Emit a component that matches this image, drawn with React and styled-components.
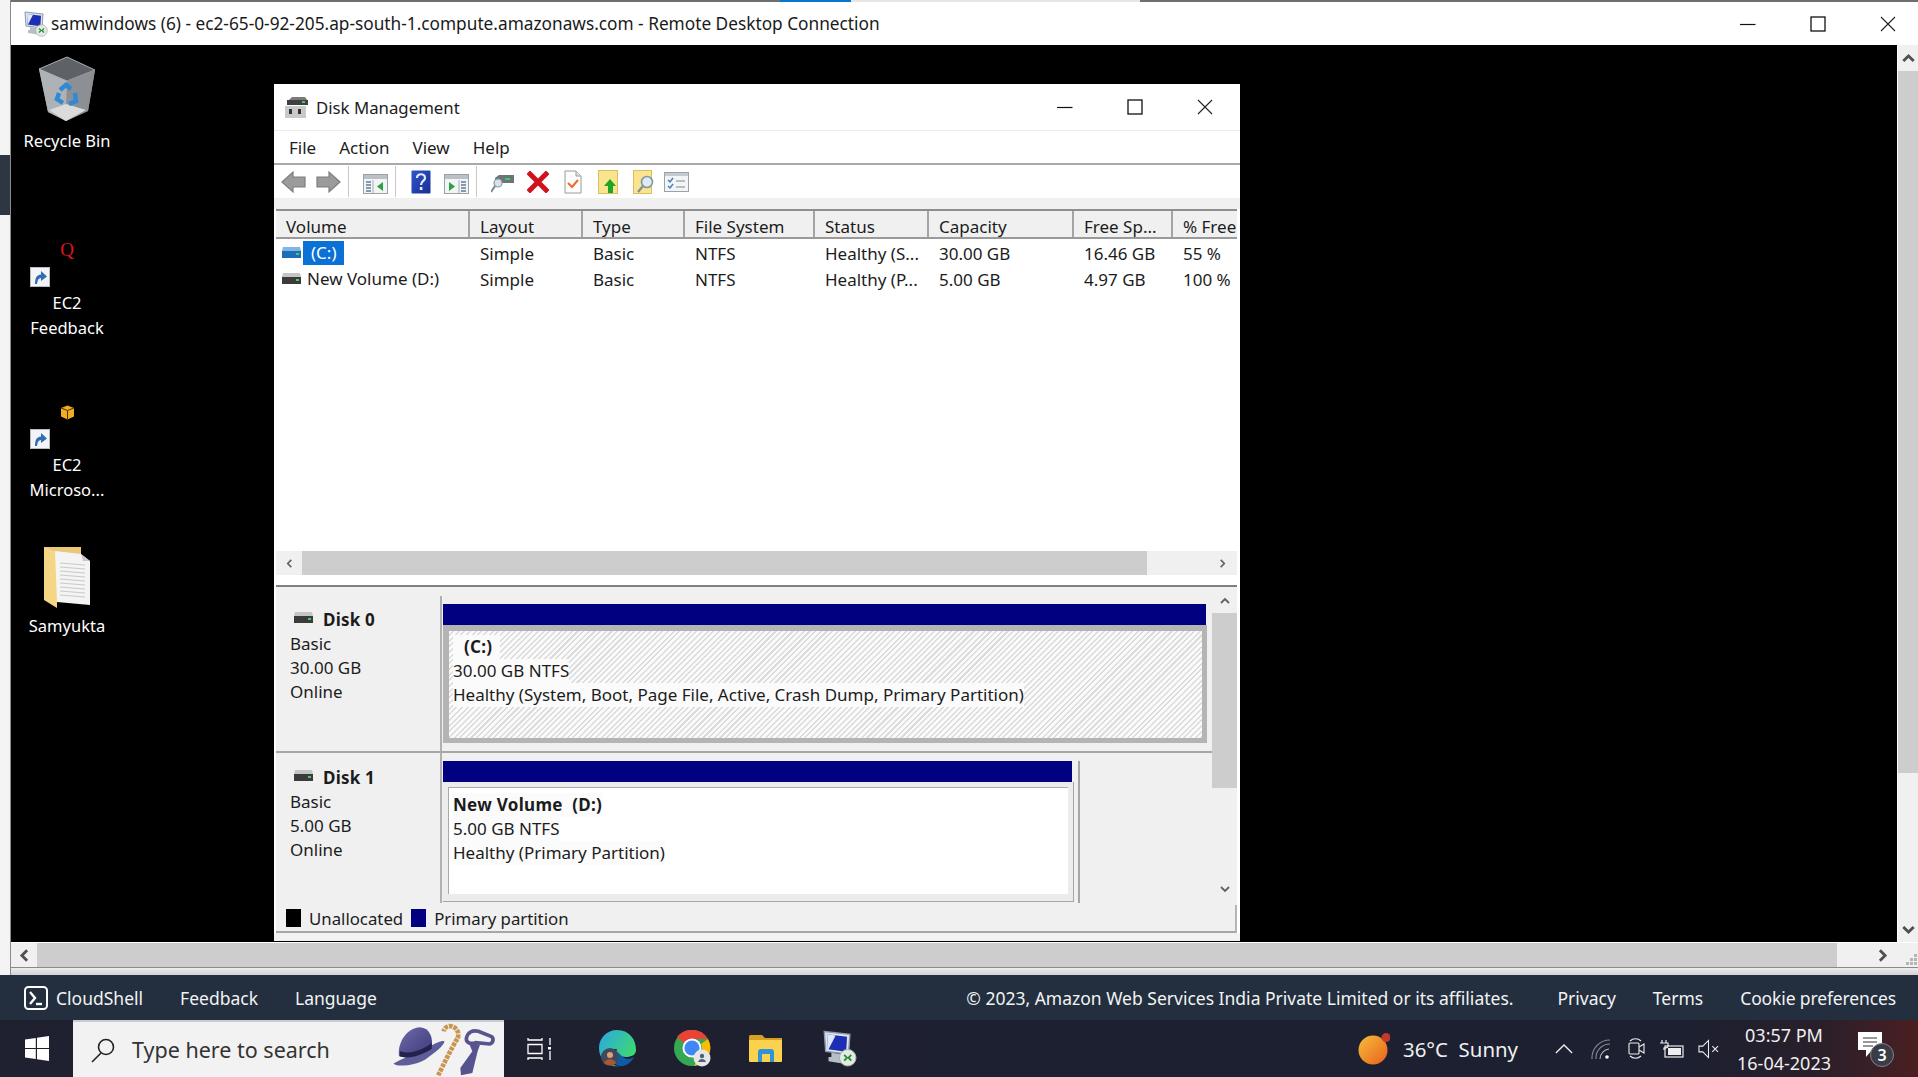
import React from "react";
import styled, { createGlobalStyle } from "styled-components";

const Global = createGlobalStyle`
  html, body { margin: 0; padding: 0; background: #000; }
  * { box-sizing: border-box; }
  body { font-family: "Noto Sans", "Open Sans", sans-serif; }
`;

const COLUMNS = [
  { label: "Volume", width: 194 },
  { label: "Layout", width: 113 },
  { label: "Type", width: 102 },
  { label: "File System", width: 130 },
  { label: "Status", width: 114 },
  { label: "Capacity", width: 145 },
  { label: "Free Sp...", width: 99 },
  { label: "% Free", width: 64 },
];

const VOLUMES = [
  { name: "(C:)", selected: true, cells: ["Simple", "Basic", "NTFS", "Healthy (S...", "30.00 GB", "16.46 GB", "55 %"] },
  { name: "New Volume (D:)", cells: ["Simple", "Basic", "NTFS", "Healthy (P...", "5.00 GB", "4.97 GB", "100 %"] },
];

const App = () => (
  <>
    <Global />
    <Page>
      <Upper>
        <LeftStrip><StripMark /></LeftStrip>
        <RdpFrame>
          <RdpTitle>
            <TopEdge>
              <EdgeSegment $w={769} $c="#6f6f6f" />
              <EdgeSegment $w={71} $c="#0078d4" />
              <EdgeSegment $w={289} $c="#e6e6e6" />
              <EdgeSegment $grow $c="#6f6f6f" />
            </TopEdge>
            <RdpBar>
              <RdpIcon size={26} />
              <RdpText>samwindows (6) - ec2-65-0-92-205.ap-south-1.compute.amazonaws.com - Remote Desktop Connection</RdpText>
              <RdpButtons>
                <MinGlyph />
                <MaxGlyph />
                <CloseGlyph />
              </RdpButtons>
            </RdpBar>
          </RdpTitle>
          <ViewRow>
            <Desktop>
              <IconColumn>
                <DesktopItem $h={120}>
                  <RecycleBin />
                  <IconLabel $gap={6}>Recycle Bin</IconLabel>
                </DesktopItem>
                <DesktopItem $h={162} $mt={37}>
                  <SmallApp>
                    <RedQ>Q</RedQ>
                  </SmallApp>
                  <ShortcutBadge />
                  <IconLabel>EC2<br />Feedback</IconLabel>
                </DesktopItem>
                <DesktopItem $h={162}>
                  <SmallApp><AwsBox /></SmallApp>
                  <ShortcutBadge />
                  <IconLabel>EC2<br />Microso...</IconLabel>
                </DesktopItem>
                <DesktopItem $h={100} $mt={9}>
                  <FolderDoc />
                  <IconLabel>Samyukta</IconLabel>
                </DesktopItem>
              </IconColumn>

              <DiskWindow>
                <TitleBar>
                  <DiskMgmtIcon />
                  <TitleText>Disk Management</TitleText>
                  <WindowButtons>
                    <MinGlyph />
                    <MaxGlyph />
                    <CloseGlyph />
                  </WindowButtons>
                </TitleBar>
                <MenuBar>
                  <MenuItem>File</MenuItem>
                  <MenuItem>Action</MenuItem>
                  <MenuItem>View</MenuItem>
                  <MenuItem>Help</MenuItem>
                </MenuBar>
                <Toolbar>
                  <ToolSlot $ml={0}><ArrowTool /></ToolSlot>
                  <ToolSlot $ml={10}><ArrowTool $flip /></ToolSlot>
                  <ToolSep />
                  <ToolSlot $ml={14}><PaneTool /></ToolSlot>
                  <ToolSep />
                  <ToolSlot $ml={15}><HelpTool /></ToolSlot>
                  <ToolSlot $ml={13}><PaneTool $flip /></ToolSlot>
                  <ToolSep />
                  <ToolSlot $ml={14}><ScanTool /></ToolSlot>
                  <ToolSlot $ml={13}><DeleteTool /></ToolSlot>
                  <ToolSlot $ml={15}><CheckDocTool /></ToolSlot>
                  <ToolSlot $ml={16}><FolderUpTool /></ToolSlot>
                  <ToolSlot $ml={15}><FolderFindTool /></ToolSlot>
                  <ToolSlot $ml={9}><ChecklistTool /></ToolSlot>
                </Toolbar>
                <ToolGap />
                <VolumePane>
                  <HeaderRow>
                    {COLUMNS.map(c => <HeaderCell key={c.label} $w={c.width}>{c.label}</HeaderCell>)}
                  </HeaderRow>
                  <ListBody>
                    {VOLUMES.map(v => (
                      <VolumeRow key={v.name}>
                        <NameCell $w={COLUMNS[0].width}>
                          <DriveGlyph $blue={v.selected} />
                          <VolumeName $selected={v.selected}>{v.name}</VolumeName>
                        </NameCell>
                        {v.cells.map((text, i) => (
                          <DataCell key={i} $w={COLUMNS[i + 1].width}>{text}</DataCell>
                        ))}
                      </VolumeRow>
                    ))}
                  </ListBody>
                  <PaneScroll>
                    <ArrowCell><Chevron dir="left" size={9} /></ArrowCell>
                    <PaneThumb />
                    <ArrowCell $wide><Chevron dir="right" size={9} /></ArrowCell>
                  </PaneScroll>
                </VolumePane>
                <SplitLine />
                <DiskArea>
                  <DiskRows>
                    <DiskRow $h={165} $line>
                      <DiskInfo $top={20}>
                        <DiskHead><DriveGlyph /><b>Disk 0</b></DiskHead>
                        <div>Basic</div>
                        <div>30.00 GB</div>
                        <div>Online</div>
                      </DiskInfo>
                      <DiskMap $mt={8} $top={8}>
                        <PartitionBar $w={763} />
                        <HatchedFrame>
                          <HatchedBody>
                            <PartLine $indent><b>(C:)</b></PartLine>
                            <PartLine>30.00 GB NTFS</PartLine>
                            <PartLine>Healthy (System, Boot, Page File, Active, Crash Dump, Primary Partition)</PartLine>
                          </HatchedBody>
                        </HatchedFrame>
                      </DiskMap>
                    </DiskRow>
                    <DiskRow $h={150}>
                      <DiskInfo $top={13}>
                        <DiskHead><DriveGlyph /><b>Disk 1</b></DiskHead>
                        <div>Basic</div>
                        <div>5.00 GB</div>
                        <div>Online</div>
                      </DiskInfo>
                      <DiskMap $top={8}>
                        <SecondDisk>
                          <PartitionBar $w={629} />
                          <PlainFrame>
                            <PlainBody>
                              <PartLine><b>New Volume&nbsp; (D:)</b></PartLine>
                              <PartLine>5.00 GB NTFS</PartLine>
                              <PartLine>Healthy (Primary Partition)</PartLine>
                            </PlainBody>
                          </PlainFrame>
                        </SecondDisk>
                      </DiskMap>
                    </DiskRow>
                  </DiskRows>
                  <DiskScroll>
                    <VArrow $h={26}><Chevron dir="up" size={10} /></VArrow>
                    <DiskThumb />
                    <VArrow $h={116} $end><Chevron dir="down" size={10} /></VArrow>
                  </DiskScroll>
                </DiskArea>
                <Legend>
                  <Swatch $c="#000" />
                  <LegendText>Unallocated</LegendText>
                  <Swatch $c="#000080" />
                  <LegendText>Primary partition</LegendText>
                </Legend>
                <WindowFoot />
              </DiskWindow>
            </Desktop>
            <OuterVScroll>
              <OuterArrow $h={26}><Chevron dir="up" size={13} thick /></OuterArrow>
              <OuterThumb />
              <OuterArrow $grow $end><Chevron dir="down" size={13} thick /></OuterArrow>
            </OuterVScroll>
          </ViewRow>
          <OuterHScroll>
            <OuterHStart><Chevron dir="left" size={13} thick /></OuterHStart>
            <OuterHThumb />
            <OuterHEnd><Chevron dir="right" size={13} thick /></OuterHEnd>
            <GripCell>
              <svg width="12" height="14" viewBox="0 0 12 14" fill="#b5b5b5">
                <rect x="8" y="1" width="3" height="3" /><rect x="4" y="5" width="3" height="3" /><rect x="8" y="5" width="3" height="3" />
                <rect x="0" y="9" width="3" height="3" /><rect x="4" y="9" width="3" height="3" /><rect x="8" y="9" width="3" height="3" />
              </svg>
            </GripCell>
          </OuterHScroll>
          <FrameFoot />
        </RdpFrame>
      </Upper>

      <AwsFooter>
        <CloudShellGlyph />
        <FootLink $gap={37}>CloudShell</FootLink>
        <FootLink $gap={37}>Feedback</FootLink>
        <FootLink>Language</FootLink>
        <FootRight>
          <FootLink $gap={44}>© 2023, Amazon Web Services India Private Limited or its affiliates.</FootLink>
          <FootLink $gap={37}>Privacy</FootLink>
          <FootLink $gap={37}>Terms</FootLink>
          <FootLink $ls={-0.13}>Cookie preferences</FootLink>
        </FootRight>
      </AwsFooter>

      <Taskbar>
        <StartCell><WindowsLogo /></StartCell>
        <SearchBox>
          <SearchGlyph />
          <SearchText>Type here to search</SearchText>
          <HatArt />
        </SearchBox>
        <TaskIcons>
          <TaskViewGlyph />
          <EdgeLogo />
          <ChromeLogo />
          <ExplorerLogo />
          <RdpIcon size={37} />
        </TaskIcons>
        <Tray>
          <SunGlyph />
          <Weather>36°C&nbsp; Sunny</Weather>
          <TrayIcons>
            <TrayCell><TrayChevron /></TrayCell>
            <TrayCell><WifiGlyph /></TrayCell>
            <TrayCell><MeetGlyph /></TrayCell>
            <TrayCell><BatteryGlyph /></TrayCell>
            <TrayCell><VolumeGlyph /></TrayCell>
          </TrayIcons>
          <Clock>
            <div>03:57 PM</div>
            <div>16-04-2023</div>
          </Clock>
          <NotifyGlyph />
        </Tray>
      </Taskbar>
    </Page>
  </>
);

export default App;

/* ---------- small drawings ---------- */

const Chevron = ({ dir, size, thick }) => {
  const rot = { left: 0, up: 90, right: 180, down: 270 }[dir];
  return (
    <svg width={size} height={size} viewBox="0 0 10 10" style={{ transform: `rotate(${rot}deg)` }}>
      <path d="M7 1 L3 5 L7 9" fill="none" stroke={thick ? "#505050" : "#606060"} strokeWidth={thick ? 2.2 : 1.8} />
    </svg>
  );
};

const MinGlyph = () => (
  <svg width="16" height="16" viewBox="0 0 16 16"><path d="M0 8.5H15.5" stroke="#111" strokeWidth="1.2" /></svg>
);
const MaxGlyph = () => (
  <svg width="16" height="16" viewBox="0 0 16 16"><rect x="1" y="1" width="14" height="14" fill="none" stroke="#111" strokeWidth="1.3" /></svg>
);
const CloseGlyph = () => (
  <svg width="16" height="16" viewBox="0 0 16 16"><path d="M1 1L15 15M15 1L1 15" stroke="#222" strokeWidth="1.1" /></svg>
);

const RdpIcon = ({ size }) => (
  <svg width={size} height={size} viewBox="0 0 26 26" style={{ flex: "none" }}>
    <path d="M3 1 L21 3 L20 17 L4 15 Z" fill="#dfe4ec" stroke="#8b97ab" strokeWidth="1" />
    <path d="M5 3 L19 4.8 L18.4 15.2 L5.6 13.6 Z" fill="#1c2fb4" />
    <path d="M5 3 L11 3.8 L6 13.6 L5.6 13.6 Z" fill="#dfe9fb" />
    <path d="M8 16 L15 17 L15 20 L19 21 L19 24 L6 22 L6 19 L8 19 Z" fill="#b8bec8" />
    <circle cx="19.5" cy="19.5" r="5.8" fill="#e3ebe2" stroke="#a5aea6" strokeWidth=".7" />
    <path d="M17 17.5 l2 2 l-2 2 M22 17.5 l-2 2 l2 2" fill="none" stroke="#23923a" strokeWidth="1.3" />
  </svg>
);

const RecycleBin = () => (
  <svg width="58" height="66" viewBox="0 0 58 66">
    <path d="M1 13 L29 1 L57 14 L50 55 L28 65 L10 56 Z" fill="#8f9499" />
    <path d="M1 13 L29 1 L57 14 L29 25 Z" fill="#5e6266" stroke="#a3a7ab" strokeWidth="1" />
    <path d="M1 13 L29 25 L28 65 L10 56 Z" fill="#aeb2b6" />
    <path d="M29 25 L57 14 L50 55 L28 65 Z" fill="#8c9095" />
    <path d="M11 54 L28 48 L48 54 L28 65 Z" fill="#d9dbdd" />
    <g fill="none" stroke="#2e8ad6" strokeWidth="4.5">
      <path d="M22 34 L28 29 L33 33" />
      <path d="M37 37 L38 45 L31 48" />
      <path d="M25 47 L19 43 L21 37" />
    </g>
  </svg>
);

const ShortcutBadge = () => (
  <BadgeBox>
    <svg width="18" height="18" viewBox="0 0 18 18">
      <path d="M4 16 C4 9 6 7 10 6.5 L10 3 L16 8.5 L10 13 L10 10 C7.5 10 6.5 12 6 16 Z" fill="#2f6db5" />
    </svg>
  </BadgeBox>
);

const AwsBox = () => (
  <svg width="15" height="15" viewBox="0 0 15 15">
    <path d="M7.5 0.5 L14 3 L14 11.5 L7.5 14.5 L1 11.5 L1 3 Z" fill="#f0ad1f" />
    <path d="M1 3 L7.5 5.5 L14 3 M7.5 5.5 V14.5" fill="none" stroke="#4a3208" strokeWidth="1" />
  </svg>
);

const FolderDoc = () => (
  <svg width="48" height="64" viewBox="0 0 48 64">
    <path d="M1 1 L38 1 L38 12 L1 12 Z" fill="#e9c877" />
    <path d="M1 1 L14 6 L14 62 L1 54 Z" fill="#f5d685" />
    <path d="M12 5 L38 8 L47 15 L47 59 L14 56 Z" fill="#f4f4f4" />
    <path d="M38 8 L47 15 L40 15 Z" fill="#c8c8c8" />
    <g stroke="#c9c9c9" strokeWidth="1">
      <path d="M17 17 L42 19M17 21 L42 23M17 25 L42 27M17 29 L42 31M17 33 L42 35M17 37 L42 39M17 41 L42 43M17 45 L42 47M17 49 L42 51" />
    </g>
  </svg>
);

const DiskMgmtIcon = () => (
  <svg width="25" height="22" viewBox="0 0 25 22" style={{ marginRight: 7 }}>
    <path d="M4 5 L8 1 H21 L24 5 Z" fill="#7a7a7a" />
    <rect x="3" y="4" width="21" height="5" fill="#404040" />
    <rect x="18" y="5" width="3" height="2" fill="#3fcf5a" />
    <rect x="1" y="10" width="21" height="12" fill="#c9c9c9" />
    <rect x="5" y="13" width="3" height="5" fill="#333" />
    <rect x="14" y="13" width="3" height="5" fill="#333" />
  </svg>
);

const ArrowTool = ({ $flip }) => (
  <svg width="25" height="24" viewBox="0 0 25 24" style={{ transform: $flip ? "scaleX(-1)" : "none" }}>
    <path d="M1 12 L12 2 L12 7 L24 7 L24 17 L12 17 L12 22 Z" fill="#9b9b9b" stroke="#7e7e7e" strokeWidth="1.2" />
  </svg>
);

const PaneTool = ({ $flip }) => (
  <svg width="25" height="20" viewBox="0 0 25 20" style={{ marginTop: 4 }}>
    <rect x=".5" y=".5" width="24" height="19" fill="#f2f4f5" stroke="#9ba3a8" />
    <rect x="1" y="1" width="23" height="4" fill="#b9c1c6" />
    <g transform={$flip ? "translate(25 0) scale(-1 1)" : undefined}>
      <path d="M3 8H8M3 11H8M3 14H8M3 17H8" stroke="#5c7c94" strokeWidth="1.4" />
      <path d="M10 6V19" stroke="#aab" />
      <path d="M20 8 V17 L14 12.5 Z" fill="#2ea043" />
    </g>
  </svg>
);

const HelpTool = () => (
  <svg width="20" height="24" viewBox="0 0 20 24">
    <defs>
      <linearGradient id="helpFill" x1="0" x2="1" y1="0" y2="1">
        <stop offset="0" stopColor="#2f55cf" />
        <stop offset="1" stopColor="#182f8f" />
      </linearGradient>
    </defs>
    <rect x=".5" y=".5" width="19" height="23" rx="1" fill="url(#helpFill)" />
    <path d="M6 8 C6 3 14 3 14 8 C14 11 10 11 10 15" fill="none" stroke="#e8ecfa" strokeWidth="2.2" />
    <rect x="8.8" y="17" width="2.6" height="3" fill="#e8ecfa" />
  </svg>
);

const ScanTool = () => (
  <svg width="23" height="24" viewBox="0 0 23 24">
    <path d="M4 8 L8 5 H23 V13 H4 Z" fill="#6b7478" />
    <rect x="14" y="8" width="5" height="2" fill="#3fcf5a" />
    <circle cx="7" cy="13" r="4" fill="#d5e2ea" stroke="#8a98a3" strokeWidth="1.2" />
    <path d="M4 16 L0 22" stroke="#7a858e" strokeWidth="2" />
  </svg>
);

const DeleteTool = () => (
  <svg width="22" height="22" viewBox="0 0 22 22">
    <path d="M3 3 L19 19 M19 3 L3 19" stroke="#d0121b" strokeWidth="5" strokeLinecap="square" />
  </svg>
);

const CheckDocTool = () => (
  <svg width="18" height="24" viewBox="0 0 18 24">
    <path d="M1 1 H12 L17 6 V23 H1 Z" fill="#fdfdfd" stroke="#9a9a9a" />
    <path d="M12 1 V6 H17" fill="#e5e5e5" stroke="#9a9a9a" />
    <path d="M4 13 L8 17 L14 10" fill="none" stroke="#f0682a" strokeWidth="2" />
  </svg>
);

const FolderUpTool = () => (
  <svg width="20" height="24" viewBox="0 0 20 24">
    <rect x=".5" y=".5" width="19" height="23" fill="#fbe48f" stroke="#d8bf60" />
    <path d="M12 9 L18 16 H15 V23 H10 V16 H6 Z" fill="#1da628" />
  </svg>
);

const FolderFindTool = () => (
  <svg width="22" height="24" viewBox="0 0 22 24">
    <rect x=".5" y=".5" width="18" height="23" fill="#fbe48f" stroke="#d8bf60" />
    <circle cx="14" cy="12" r="5.5" fill="#dfeaf2" stroke="#7f97a8" strokeWidth="1.6" />
    <path d="M10 16 L5 22" stroke="#8a8f94" strokeWidth="2.4" />
  </svg>
);

const ChecklistTool = () => (
  <svg width="25" height="20" viewBox="0 0 25 20">
    <rect x=".5" y=".5" width="24" height="19" fill="#f2f4f5" stroke="#9ba3a8" />
    <rect x="1" y="1" width="23" height="3" fill="#c4cbd0" />
    <path d="M4 8 l2 2 l3 -4 M4 14 l2 2 l3 -4" fill="none" stroke="#3d7fc4" strokeWidth="1.4" />
    <path d="M12 9H21M12 15H21" stroke="#a5adb3" strokeWidth="1.3" />
  </svg>
);

const DriveGlyph = ({ $blue }) => (
  <svg width="21" height="14" viewBox="0 0 21 14" style={{ flex: "none" }}>
    <path d="M2 1 H19 L20 5 H1 Z" fill={$blue ? "#7fb5e8" : "#c5c5c5"} />
    <rect x="1" y="5" width="19" height="7" fill={$blue ? "#1d6eb8" : "#3b3b3b"} />
    <rect x="15" y="7" width="3" height="2" fill="#40d060" />
  </svg>
);

const CloudShellGlyph = () => (
  <svg width="24" height="24" viewBox="0 0 24 24" style={{ marginRight: 8, flex: "none" }}>
    <rect x="1" y="1" width="22" height="22" rx="3.5" fill="none" stroke="#fff" strokeWidth="2" />
    <path d="M6 6 L11 12 L6 18" fill="none" stroke="#fff" strokeWidth="2.4" />
    <path d="M12 18 H18" stroke="#fff" strokeWidth="2.4" />
  </svg>
);

const WindowsLogo = () => (
  <svg width="24" height="25" viewBox="0 0 24 25" fill="#fff">
    <path d="M0 3.5 L10.8 2 V12 H0 Z" />
    <path d="M12 1.8 L24 0 V12 H12 Z" />
    <path d="M0 13 H10.8 V23 L0 21.5 Z" />
    <path d="M12 13 H24 V25 L12 23.2 Z" />
  </svg>
);

const SearchGlyph = () => (
  <svg width="26" height="26" viewBox="0 0 26 26" style={{ flex: "none" }}>
    <circle cx="16" cy="10" r="7.5" fill="none" stroke="#222" strokeWidth="1.6" />
    <path d="M11 16 L2 25" stroke="#222" strokeWidth="1.6" />
  </svg>
);

const HatArt = () => (
  <svg width="119" height="55" viewBox="0 12 357 165" style={{ flex: "none", marginLeft: "auto" }}>
    <defs>
      <linearGradient id="hatDome" x1="0" x2="1" y1="0" y2="1">
        <stop offset="0" stopColor="#6d69ab" />
        <stop offset="1" stopColor="#3d3a78" />
      </linearGradient>
    </defs>
    <path d="M25 137 C45 125 100 105 135 85 C150 75 175 65 178 70 C180 80 150 105 120 125 C90 142 40 148 25 137 Z" fill="#5f5c9a" />
    <path d="M42 115 C36 70 70 28 105 28 C135 30 145 60 140 92 C115 110 70 125 42 115 Z" fill="url(#hatDome)" />
    <path d="M45 100 C75 110 115 95 140 75 L140 92 C115 110 70 125 45 115 Z" fill="#23224f" />
    <path d="M160 172 C172 145 200 90 218 60 C225 42 212 25 195 24 C186 24 178 30 176 40" fill="none" stroke="#c9964f" strokeWidth="14" strokeDasharray="11 3" />
    <path d="M244 62 C248 42 262 36 280 40 L318 55 C328 60 325 75 314 78 L272 74 C258 78 244 76 244 62 Z" fill="none" stroke="#56538f" strokeWidth="11" />
    <path d="M250 72 L285 80 L278 100 L262 165 L228 172 L226 150 L262 100 Z" fill="#56538f" />
  </svg>
);

const TaskViewGlyph = () => (
  <svg width="25" height="24" viewBox="0 0 25 24" fill="none" stroke="#fff" strokeWidth="1.3" style={{ marginRight: 9 }}>
    <path d="M1 1 V3 H15 V1 M1 7.5 H15 V16.5 H1 Z M1 23 V21 H15 V23" />
    <path d="M23 1 V8 M23 14 V23" />
    <rect x="21" y="10" width="3" height="2.5" fill="#fff" stroke="none" />
  </svg>
);

const EdgeLogo = () => (
  <svg width="37" height="37" viewBox="0 0 37 37">
    <defs>
      <linearGradient id="edgeA" x1="0" x2="1" y1="0" y2=".6">
        <stop offset="0" stopColor="#2ba6e8" />
        <stop offset="1" stopColor="#3ed96f" />
      </linearGradient>
    </defs>
    <path d="M18 0 C30 0 37 9 37 20 C37 25 32 27 27 27 C20 27 16 23 18 19 C12 18 8 24 10 30 C12 34 16 36 20 36 C10 38 0 30 0 18 C0 8 8 0 18 0 Z" fill="url(#edgeA)" />
    <path d="M20 36 C14 34 11 28 14 23 C18 19 20 24 24 27 C28 30 32 29 35 27 C32 33 26 37 20 36 Z" fill="#0f5ba8" />
    <circle cx="11" cy="27" r="9" fill="#3e4a5c" />
    <circle cx="11" cy="25" r="3" fill="#d9a07a" />
    <path d="M5 33 C7 28 15 28 17 33 C14 36 8 36 5 33Z" fill="#b5532f" />
  </svg>
);

const ChromeLogo = () => (
  <svg width="37" height="37" viewBox="0 0 37 37">
    <circle cx="18" cy="18" r="18" fill="#34a853" />
    <path d="M18 0 A18 18 0 0 1 34 9 L18 9 A9 9 0 0 0 10 13 L3 7 A18 18 0 0 1 18 0 Z" fill="#ea4335" />
    <path d="M34 9 A18 18 0 0 1 20 36 L27 23 A9 9 0 0 0 27 14 Z" fill="#fbbc05" />
    <circle cx="18" cy="18" r="9.5" fill="#fff" />
    <circle cx="18" cy="18" r="7.6" fill="#4285f4" />
    <circle cx="28" cy="28" r="8.5" fill="#e6e6e6" />
    <circle cx="28" cy="26" r="2.2" fill="#50607a" />
    <path d="M24 32 C25 28 31 28 32 32 Z" fill="#50607a" />
  </svg>
);

const ExplorerLogo = () => (
  <svg width="33" height="27" viewBox="0 0 33 27">
    <path d="M0 1.5 C0 .5 1 0 2 0 H13 L16 3 H33 V14 H0 Z" fill="#d6a023" />
    <rect x="0" y="5" width="33" height="22" rx="1" fill="#fbd24e" />
    <path d="M9 27 V17 C9 15 10 14 12 14 H22 C24 14 25 15 25 17 V27 H21 V19 H13 V27 Z" fill="#2f93d8" />
  </svg>
);

const SunGlyph = () => (
  <svg width="32" height="32" viewBox="0 0 32 32" style={{ flex: "none" }}>
    <defs>
      <linearGradient id="sunFill" x1="0" x2="1" y1="0" y2="1">
        <stop offset="0" stopColor="#f7bd3b" />
        <stop offset="1" stopColor="#e8601c" />
      </linearGradient>
    </defs>
    <circle cx="15" cy="17" r="14.5" fill="url(#sunFill)" />
    <circle cx="28" cy="4.5" r="4.5" fill="#c23a2c" />
  </svg>
);

const TrayChevron = () => (
  <svg width="18" height="11" viewBox="0 0 20 12"><path d="M1 11 L10 2 L19 11" fill="none" stroke="#eee" strokeWidth="1.5" /></svg>
);

const WifiGlyph = () => (
  <svg width="19" height="20" viewBox="0 0 19 20" fill="none" stroke="#8a8d96" strokeWidth="1.1">
    <path d="M1 20 A18 18 0 0 1 19 1" />
    <path d="M5 20 A14 14 0 0 1 19 5" />
    <path d="M9 20 A10 10 0 0 1 18 10" stroke="#b5b7bd" />
    <circle cx="16" cy="18" r="1.8" fill="#fff" stroke="none" />
  </svg>
);

const MeetGlyph = () => (
  <svg width="17" height="23" viewBox="0 0 17 23" fill="none" stroke="#eee" strokeWidth="1.1">
    <path d="M2 4 C5 1 10 1 13 4 M2 19 C5 22 10 22 13 19" />
    <rect x="1" y="6" width="10" height="11" rx="1" />
    <path d="M11 10 L16 7 V16 L11 13" />
  </svg>
);

const BatteryGlyph = () => (
  <svg width="25" height="18" viewBox="0 0 25 18" fill="none" stroke="#eee" strokeWidth="1.2">
    <path d="M2 0 V3 M6 0 V3 M0 3 H8 V6 C8 8 4 8 4 8 V10" />
    <rect x="5" y="6" width="18" height="11" />
    <rect x="8" y="8" width="13" height="7" fill="#eee" stroke="none" />
  </svg>
);

const VolumeGlyph = () => (
  <svg width="21" height="20" viewBox="0 0 22 20" fill="none" stroke="#eee" strokeWidth="1.1">
    <path d="M1 7 H5 L11 1 V19 L5 13 H1 Z" />
    <path d="M15 7 L21 13 M21 7 L15 13" />
  </svg>
);

const NotifyGlyph = () => (
  <NotifyBox>
    <svg width="24" height="25" viewBox="0 0 24 25">
      <path d="M0 0 H24 V18 H14 L8 25 V18 H0 Z" fill="#fff" />
      <path d="M5 6 H19 M5 10 H19 M5 14 H15" stroke="#333" strokeWidth="1.2" />
    </svg>
    <NotifyCount>3</NotifyCount>
  </NotifyBox>
);

/* ---------- page frame ---------- */

const Page = styled.div`
  width: 1918px;
  height: 1077px;
  overflow: hidden;
  display: flex;
  flex-direction: column;
  background: #000;
`;

const Upper = styled.div`
  height: 975px;
  display: flex;
`;

const LeftStrip = styled.div`
  width: 10px;
  flex: none;
  background: #f4f4f4;
  padding-top: 155px;
`;

const StripMark = styled.div`
  height: 60px;
  background: #2d3643;
`;

const RdpFrame = styled.div`
  flex: 1;
  min-width: 0;
  display: flex;
  flex-direction: column;
  border-left: 1px solid #8b8b8b;
`;

const RdpTitle = styled.div`
  height: 45px;
  background: #fff;
  display: flex;
  flex-direction: column;
`;

const TopEdge = styled.div`
  height: 2px;
  display: flex;
`;

const EdgeSegment = styled.div`
  width: ${p => p.$w}px;
  flex: ${p => (p.$grow ? 1 : "none")};
  background: ${p => p.$c};
`;

const RdpBar = styled.div`
  flex: 1;
  display: flex;
  align-items: center;
  padding: 0 0 0 11px;
`;

const RdpText = styled.div`
  margin-left: 3px;
  font-size: 17.25px;
  color: #1a1a1a;
  white-space: nowrap;
`;

const RdpButtons = styled.div`
  margin-left: auto;
  width: 178px;
  padding-right: 22px;
  display: flex;
  justify-content: space-between;
  align-items: center;
`;

const ViewRow = styled.div`
  height: 897px;
  display: flex;
`;

const Desktop = styled.div`
  position: relative;
  flex: 1;
  background: #000;
`;

const IconColumn = styled.div`
  width: 112px;
  padding-top: 11px;
  display: flex;
  flex-direction: column;
  align-items: center;
`;

const DesktopItem = styled.div`
  height: ${p => p.$h}px;
  width: 100%;
  margin-top: ${p => p.$mt || 0}px;
  display: flex;
  flex-direction: column;
  align-items: center;
  flex: none;
`;

const IconLabel = styled.div`
  color: #fff;
  font-size: 16.5px;
  line-height: 25px;
  text-align: center;
  margin-top: ${p => p.$gap ?? 3}px;
`;

const SmallApp = styled.div`
  height: 22px;
  display: flex;
  align-items: center;
  justify-content: center;
  margin-top: 26px;
`;

const RedQ = styled.span`
  font-family: "Liberation Serif", serif;
  font-size: 19px;
  color: #e0141c;
`;

const BadgeBox = styled.div`
  width: 20px;
  height: 20px;
  margin: 6px 0 0 -55px;
  background: #f2f4f8;
  border: 1px solid #b9bcc2;
  display: flex;
  align-items: center;
  justify-content: center;
`;

/* ---------- disk management window ---------- */

const DiskWindow = styled.div`
  position: absolute;
  left: 263px;
  top: 39px;
  width: 966px;
  height: 857px;
  background: #fff;
  display: flex;
  flex-direction: column;
  color: #1c1c1c;
  font-size: 17px;
`;

const TitleBar = styled.div`
  height: 47px;
  flex: none;
  display: flex;
  align-items: center;
  padding: 0 27px 0 10px;
  border-bottom: 1px solid #ebebeb;
`;

const TitleText = styled.div`
  font-size: 16.8px;
`;

const WindowButtons = styled.div`
  margin-left: auto;
  width: 156px;
  display: flex;
  justify-content: space-between;
`;

const MenuBar = styled.div`
  height: 34px;
  flex: none;
  display: flex;
  align-items: center;
  gap: 23px;
  padding-left: 15px;
  border-bottom: 2px solid #a9a9a9;
`;

const MenuItem = styled.div`
  font-size: 17px;
`;

const Toolbar = styled.div`
  height: 33px;
  flex: none;
  display: flex;
  align-items: center;
  padding-left: 7px;
`;

const ToolSlot = styled.div`
  display: flex;
  flex: none;
  margin-left: ${p => p.$ml}px;
`;

const ToolSep = styled.div`
  width: 1px;
  height: 31px;
  flex: none;
  background: #c8c8c8;
  margin-left: 7px;
`;

const ToolGap = styled.div`
  height: 11px;
  flex: none;
  background: #f0f0f0;
`;

const VolumePane = styled.div`
  height: 366px;
  flex: none;
  margin: 0 3px 0 2px;
  display: flex;
  flex-direction: column;
  border-top: 2px solid #8e8e8e;
`;

const HeaderRow = styled.div`
  height: 28px;
  flex: none;
  display: flex;
  background: #f0f0f0;
  border-bottom: 2px solid #9a9a9a;
`;

const HeaderCell = styled.div`
  width: ${p => p.$w}px;
  flex: none;
  overflow: hidden;
  white-space: nowrap;
  padding: 4px 0 0 10px;
  font-size: 17px;
  border-right: 2px solid #a4a4a4;
  &:last-child { border-right: 0; }
`;

const ListBody = styled.div`
  flex: 1;
  background: #fff;
  padding-top: 1px;
  display: flex;
  flex-direction: column;
`;

const VolumeRow = styled.div`
  height: 26px;
  display: flex;
  align-items: center;
`;

const NameCell = styled.div`
  width: ${p => p.$w}px;
  flex: none;
  display: flex;
  align-items: center;
  padding-left: 5px;
`;

const VolumeName = styled.div`
  font-size: 17px;
  margin-left: 1px;
  height: 24px;
  line-height: 24px;
  padding: 0 7px 0 ${p => (p.$selected ? 8 : 4)}px;
  background: ${p => (p.$selected ? "#0a72d6" : "transparent")};
  color: ${p => (p.$selected ? "#fff" : "inherit")};
`;

const DataCell = styled.div`
  width: ${p => p.$w}px;
  flex: none;
  padding-left: 10px;
  font-size: 17px;
  white-space: nowrap;
`;

const PaneScroll = styled.div`
  height: 24px;
  flex: none;
  display: flex;
  background: #f0f0f0;
`;

const ArrowCell = styled.div`
  width: ${p => (p.$wide ? 90 : 26)}px;
  flex: none;
  display: flex;
  align-items: center;
  justify-content: ${p => (p.$wide ? "flex-end" : "center")};
  padding-right: ${p => (p.$wide ? 10 : 0)}px;
`;

const PaneThumb = styled.div`
  flex: 1;
  background: #cdcdcd;
`;

const SplitLine = styled.div`
  height: 12px;
  flex: none;
  margin: 0 3px 0 2px;
  background: #fff;
  border-bottom: 2px solid #7f7f7f;
`;

const DiskArea = styled.div`
  height: 318px;
  flex: none;
  margin: 0 3px 0 2px;
  display: flex;
  background: #f0f0f0;
`;

const DiskRows = styled.div`
  width: 936px;
  flex: none;
  padding-top: 1px;
  display: flex;
  flex-direction: column;
`;

const DiskRow = styled.div`
  height: ${p => p.$h}px;
  flex: none;
  display: flex;
  border-bottom: ${p => (p.$line ? "2px solid #a6a6a6" : "0")};
`;

const DiskInfo = styled.div`
  width: 164px;
  flex: none;
  padding: ${p => p.$top}px 0 0 14px;
  font-size: 17px;
  line-height: 24px;
`;

const DiskHead = styled.div`
  display: flex;
  align-items: center;
  gap: 9px;
  padding-left: 3px;
  font-size: 17px;
  svg { margin-top: -5px; }
  b { letter-spacing: 0.2px; }
`;

const DiskMap = styled.div`
  flex: 1;
  margin-top: ${p => p.$mt || 0}px;
  border-left: 2px solid #b1b1b1;
  padding: ${p => p.$top}px 0 0 1px;
  display: flex;
  flex-direction: column;
`;

const SecondDisk = styled.div`
  width: 637px;
  height: 142px;
  border-right: 2px solid #a6a6a6;
  display: flex;
  flex-direction: column;
`;

const PartitionBar = styled.div`
  width: ${p => p.$w}px;
  height: 21px;
  flex: none;
  background: #000080;
`;

const HatchedFrame = styled.div`
  width: 764px;
  height: 118px;
  flex: none;
  padding: 6px 5px 5px 6px;
  background: #b4b4b4;
`;

const HatchedBody = styled.div`
  height: 100%;
  padding: 4px 0 0 4px;
  font-size: 17px;
  line-height: 24px;
  background: repeating-linear-gradient(135deg, #fafafa 0, #fafafa 2.5px, #dcdcdc 2.5px, #dcdcdc 4px);
`;

const PlainFrame = styled.div`
  width: 631px;
  height: 120px;
  flex: none;
  padding: 5px 5px 7px 5px;
  background: #ececec;
  border-right: 1px solid #a6a6a6;
  border-bottom: 1px solid #a6a6a6;
`;

const PlainBody = styled.div`
  height: 100%;
  padding: 5px 0 0 4px;
  font-size: 17px;
  line-height: 24px;
  background: #fff;
  border-top: 1px solid #a9a9a9;
  border-left: 1px solid #a9a9a9;
`;

const PartLine = styled.div`
  width: fit-content;
  background: #fbfbfb;
  padding: 0 ${p => (p.$indent ? 8 : 0)}px 0 ${p => (p.$indent ? 11 : 0)}px;
  b { letter-spacing: 0.3px; }
`;

const DiskScroll = styled.div`
  flex: 1;
  display: flex;
  flex-direction: column;
  align-items: stretch;
`;

const VArrow = styled.div`
  height: ${p => p.$h}px;
  flex: none;
  display: flex;
  justify-content: center;
  align-items: ${p => (p.$end ? "flex-start" : "center")};
  padding-top: ${p => (p.$end ? 96 : 2)}px;
`;

const DiskThumb = styled.div`
  height: 175px;
  flex: none;
  background: #cdcdcd;
`;

const Legend = styled.div`
  height: 28px;
  flex: none;
  margin: 0 3px 0 2px;
  padding-left: 10px;
  display: flex;
  align-items: center;
  background: #f0f0f0;
  border-bottom: 2px solid #a6a6a6;
  border-right: 2px solid #b5b5b5;
`;

const Swatch = styled.div`
  width: 15px;
  height: 18px;
  background: ${p => p.$c};
  margin-right: 8px;
`;

const LegendText = styled.div`
  font-size: 16.8px;
  margin-right: 8px;
`;

const WindowFoot = styled.div`
  flex: 1;
  background: #f2f2f2;
`;

/* ---------- outer rdp scrollbars ---------- */

const OuterVScroll = styled.div`
  width: 21px;
  flex: none;
  display: flex;
  flex-direction: column;
  background: #f0f0f0;
  border-left: 1px solid #fff;
`;

const OuterArrow = styled.div`
  height: ${p => (p.$h ? `${p.$h}px` : "auto")};
  flex: ${p => (p.$grow ? 1 : "none")};
  display: flex;
  justify-content: center;
  align-items: ${p => (p.$end ? "flex-end" : "center")};
  padding-bottom: ${p => (p.$end ? 6 : 0)}px;
`;

const OuterThumb = styled.div`
  height: 702px;
  flex: none;
  background: #cdcdcd;
`;

const OuterHScroll = styled.div`
  height: 26px;
  flex: none;
  display: flex;
  background: #f0f0f0;
  border-top: 1px solid #fff;
  border-bottom: 1px solid #8a8a8a;
`;

const OuterHStart = styled.div`
  width: 26px;
  flex: none;
  display: flex;
  align-items: center;
  justify-content: center;
`;

const OuterHEnd = styled.div`
  width: 60px;
  flex: none;
  display: flex;
  align-items: center;
  justify-content: flex-end;
  padding-right: 8px;
`;

const OuterHThumb = styled.div`
  width: 1800px;
  flex: none;
  background: #cdcdcd;
`;

const GripCell = styled.div`
  flex: 1;
  display: flex;
  align-items: flex-end;
  justify-content: flex-end;
`;

const FrameFoot = styled.div`
  flex: 1;
  background: linear-gradient(#ececec, #d2d2d2);
`;

/* ---------- aws console footer ---------- */

const AwsFooter = styled.div`
  height: 45px;
  flex: none;
  display: flex;
  align-items: center;
  padding: 0 22px 0 24px;
  background: #232f3e;
`;

const FootLink = styled.div`
  color: #f2f3f3;
  font-size: 17.5px;
  letter-spacing: ${p => p.$ls || 0}px;
  white-space: nowrap;
  margin-right: ${p => p.$gap || 0}px;
`;

const FootRight = styled.div`
  margin-left: auto;
  display: flex;
  align-items: center;
`;

/* ---------- windows taskbar ---------- */

const Taskbar = styled.div`
  height: 57px;
  flex: none;
  display: flex;
  align-items: stretch;
  background: linear-gradient(90deg, #1f2030 0, #1c2030 88%, #2a1f2a 95%, #4a1f22 100%);
`;

const StartCell = styled.div`
  width: 73px;
  flex: none;
  display: flex;
  align-items: center;
  justify-content: center;
`;

const SearchBox = styled.div`
  width: 431px;
  flex: none;
  display: flex;
  align-items: center;
  padding: 0 0 0 17px;
  background: #f2f2f2;
  border-top: 2px solid #c8cbd0;
`;

const SearchText = styled.div`
  margin-left: 16px;
  font-size: 21.5px;
  color: #333;
  white-space: nowrap;
`;

const TaskIcons = styled.div`
  display: flex;
  align-items: center;
  gap: 38px;
  padding-left: 23px;
`;

const Tray = styled.div`
  margin-left: auto;
  display: flex;
  align-items: center;
  padding-right: 24px;
  color: #f0f0f0;
`;

const Weather = styled.div`
  font-size: 20.4px;
  margin: 0 28px 0 13px;
  white-space: nowrap;
`;

const TrayIcons = styled.div`
  display: flex;
  align-items: center;
`;

const TrayCell = styled.div`
  width: 36px;
  display: flex;
  align-items: center;
  justify-content: center;
`;

const Clock = styled.div`
  width: 94px;
  margin: 0 27px 0 11px;
  font-size: 18px;
  line-height: 28px;
  text-align: center;
  white-space: nowrap;
`;

const NotifyBox = styled.div`
  position: relative;
  width: 36px;
  height: 38px;
  margin-top: 4px;
`;

const NotifyCount = styled.div`
  position: absolute;
  left: 12px;
  top: 11px;
  width: 24px;
  height: 24px;
  border-radius: 50%;
  background: #3a3c46;
  border: 1px solid #80828a;
  color: #fff;
  font-size: 16px;
  font-weight: 600;
  line-height: 22px;
  text-align: center;
`;
